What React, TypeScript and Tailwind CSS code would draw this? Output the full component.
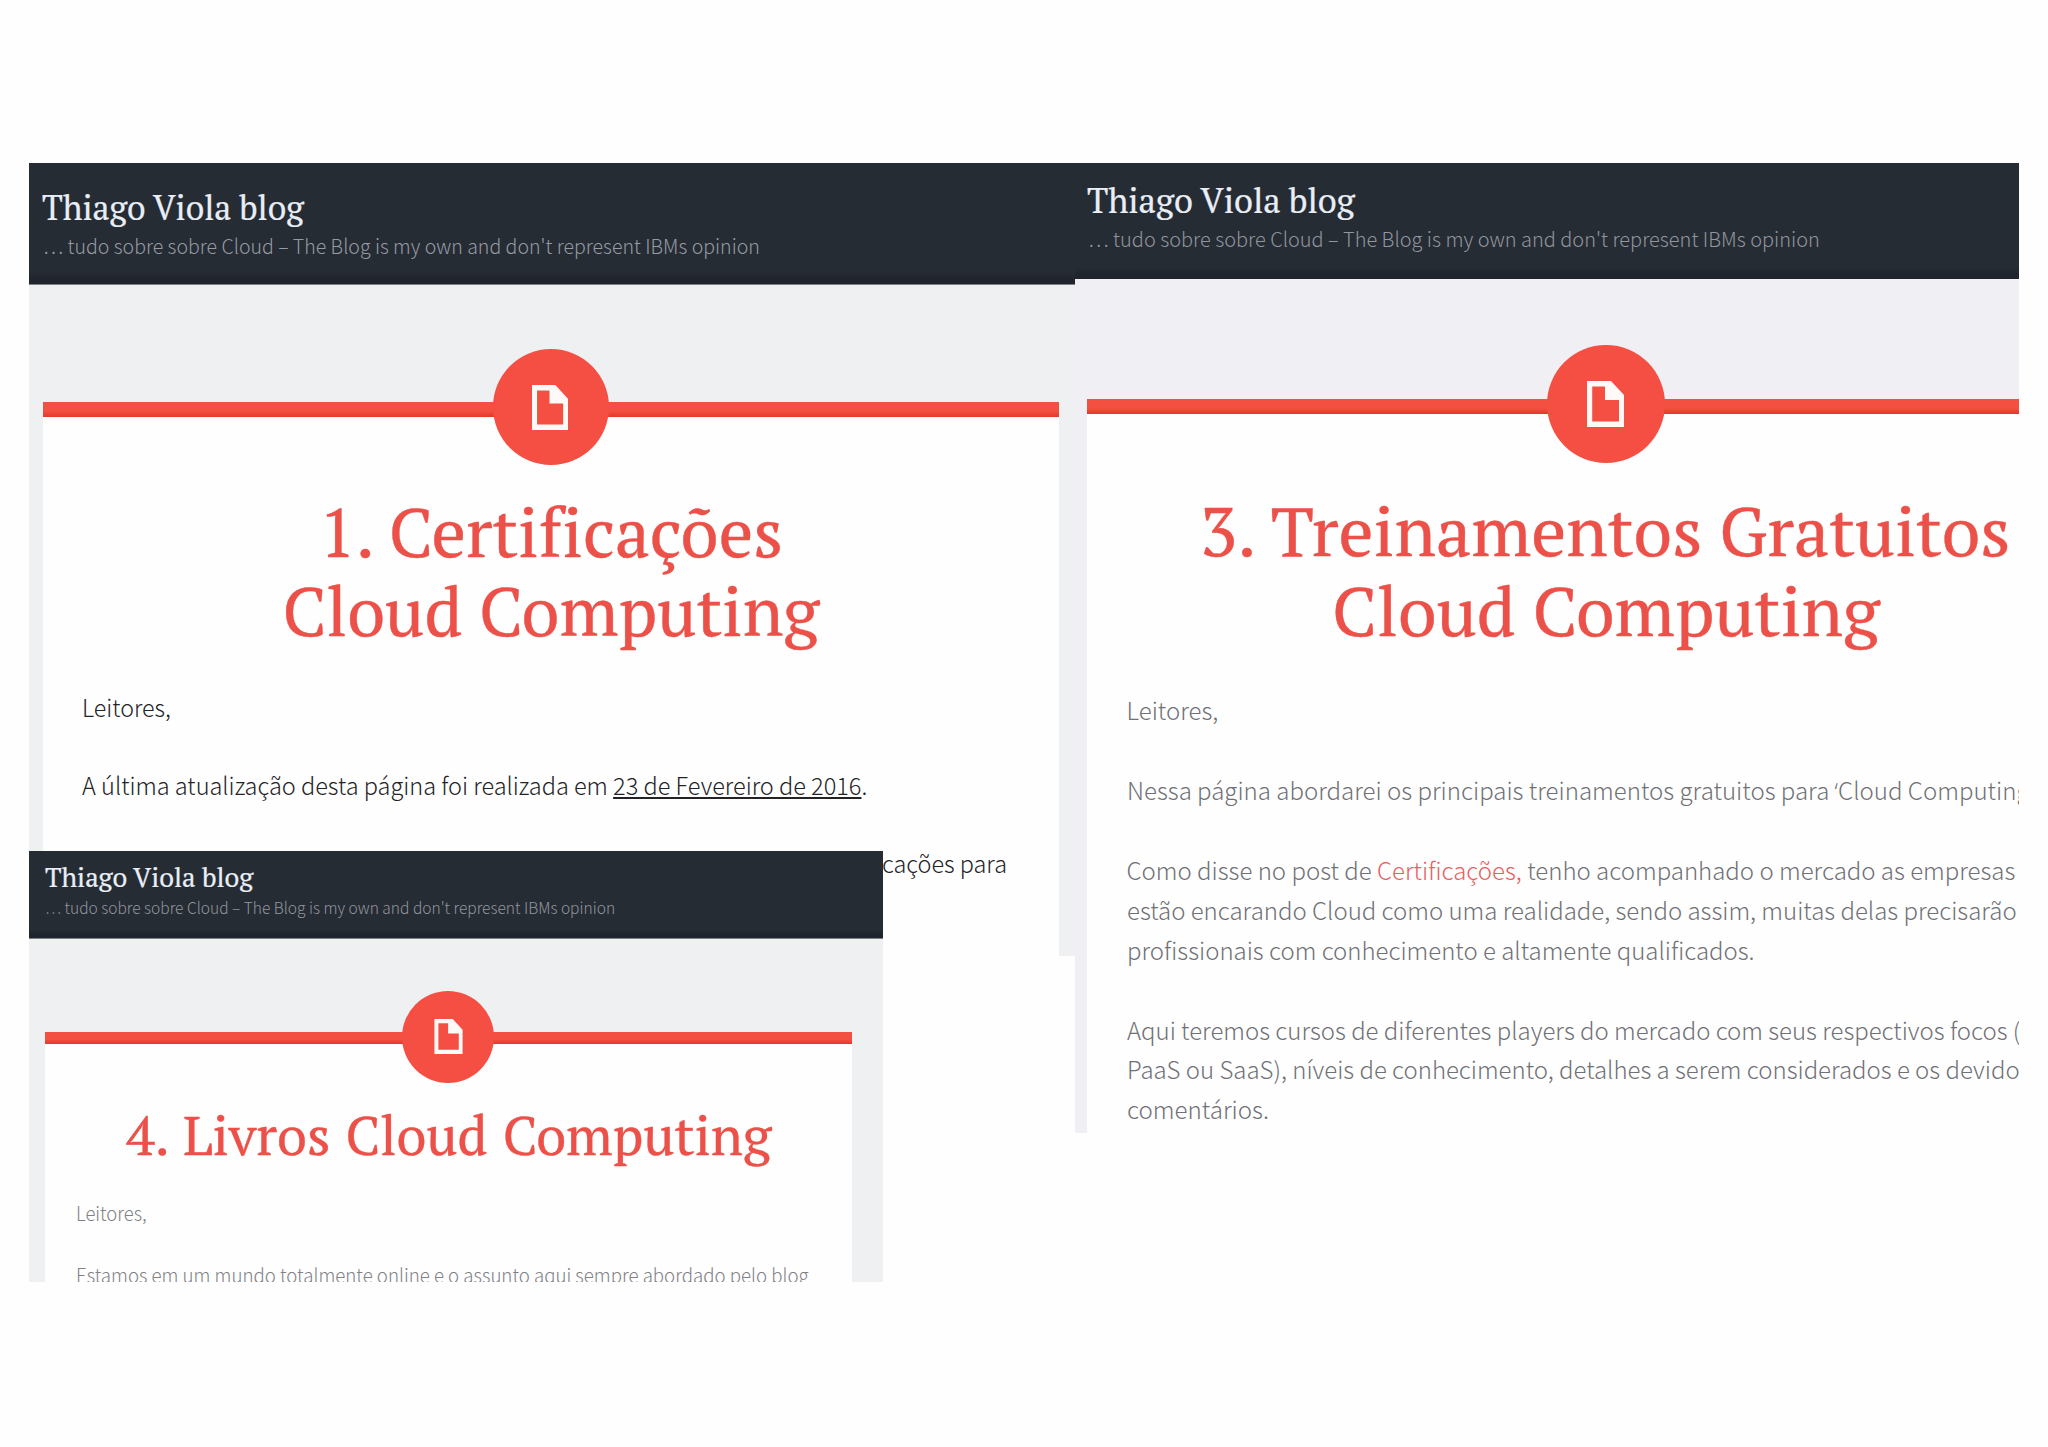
import React, { useLayoutEffect, useRef, useState } from 'react';
import clsx from 'clsx';

const SERIF = "font-['PT_Serif','Liberation_Serif',serif] [font-variant-ligatures:none]";
const SANS = "font-['Noto_Sans_CJK_SC',sans-serif] font-light";
const TAGLINE = "… tudo sobre sobre Cloud – The Blog is my own and don't represent IBMs opinion";

interface LineProps {
  width: number;
  className?: string;
  children: React.ReactNode;
}

const Line: React.FC<LineProps> = ({ width, className, children }) => {
  const ref = useRef<HTMLSpanElement>(null);
  const [scale, setScale] = useState(1);

  useLayoutEffect(() => {
    if (ref.current) setScale(width / ref.current.offsetWidth);
  }, [width]);

  return (
    <span className={clsx('block whitespace-nowrap', className)} style={{ width }}>
      <span ref={ref} className="inline-block origin-left" style={{ transform: `scaleX(${scale})` }}>
        {children}
      </span>
    </span>
  );
};

const PageIcon: React.FC<{ className?: string }> = ({ className }) => (
  <svg viewBox="0 0 37 46" className={className} fill="#fffaf8" fillRule="evenodd">
    <path d="M0 0H24L37 14V46H0Z M5.2 5.5V40.5H32V19H18V5.5Z" />
  </svg>
);

interface RibbonProps {
  className: string;
  badge: string;
  icon: string;
}

const Ribbon: React.FC<RibbonProps> = ({ className, badge, icon }) => (
  <div
    className={clsx(
      'flex items-center justify-center bg-linear-to-b from-[#f35042] from-60% to-[#e3372c]',
      className
    )}
  >
    <div className={clsx('flex shrink-0 items-center justify-center rounded-full bg-[#f44f42]', badge)}>
      <PageIcon className={icon} />
    </div>
  </div>
);

const header = 'bg-linear-to-b from-[#262c34] from-90% to-[#1f242d] to-96%';
const blogTitle = 'text-[#e9eef6] [-webkit-text-stroke:0.2px_#e9eef6]';
const heading = 'mx-auto text-[#ec5149] [-webkit-text-stroke:0.4px_#ec5149]';

const Certificacoes: React.FC = () => (
  <section className="h-[793px] w-[1046px] shrink-0 bg-[#eff0f2]">
    <header className={clsx('h-[122px] border-b border-[#7d8187] pt-[25px] pl-[13px]', header)}>
      <h1 className={clsx('text-[34px] leading-[39px]', SERIF, blogTitle)}>
        <Line width={262}>Thiago Viola blog</Line>
      </h1>
      <p className={clsx('mt-1 ml-px text-[20.5px] leading-[28px] text-[#969ba3]', SANS)}>
        <Line width={717}>{TAGLINE}</Line>
      </p>
    </header>
    <article className="mt-[117px] ml-3.5 h-[554px] w-[1016px] bg-[#fefefe]">
      <Ribbon className="h-[15px]" badge="mt-[-5px] size-[116px]" icon="mr-0.5 h-[45px] w-9" />
      <h2 className={clsx('mt-[74.5px] text-[68.5px] leading-[79px]', SERIF)}>
        <Line width={464} className={heading}>1. Certificações</Line>
        <Line width={537} className={heading}>Cloud Computing</Line>
      </h2>
      <div className={clsx('mt-[37.5px] ml-[39px] flex flex-col gap-[39px] text-[24px] leading-[39px] text-[#232326]', SANS)}>
        <Line width={89}>Leitores,</Line>
        <Line width={785}>
          A última atualização desta página foi realizada em{' '}
          <span className="underline decoration-[1.5px] underline-offset-[2px]">23 de Fevereiro de 2016</span>.
        </Line>
        <Line width={125} className="ml-[800px]">cações para</Line>
      </div>
    </article>
  </section>
);

const Treinamentos: React.FC = () => (
  <section className="h-[970px] w-[944px] shrink-0 overflow-hidden bg-[#f0eff3]">
    <header className={clsx('h-[116px] pt-[18px] pl-3', header)}>
      <h1 className={clsx('text-[34px] leading-[39px]', SERIF, blogTitle)}>
        <Line width={268}>Thiago Viola blog</Line>
      </h1>
      <p className={clsx('mt-1 ml-px text-[20.5px] leading-[28px] text-[#92969e]', SANS)}>
        <Line width={732}>{TAGLINE}</Line>
      </p>
    </header>
    <article className="mt-[120px] ml-3 h-[734px] w-[1038px] bg-[#fefefe]">
      <Ribbon className="h-[15px]" badge="mt-[-5px] size-[118px]" icon="mr-0.5 h-[46px] w-[37px]" />
      <h2 className={clsx('mt-[77px] pr-px text-[69px] leading-[79.5px]', SERIF)}>
        <Line width={811} className={heading}>3. Treinamentos Gratuitos</Line>
        <Line width={548} className={heading}>Cloud Computing</Line>
      </h2>
      <div className={clsx('mt-10 ml-[39.5px] flex flex-col gap-10 text-[24px] leading-[39.9px] text-[#707176]', SANS)}>
        <Line width={92}>Leitores,</Line>
        <Line width={906}>
          Nessa página abordarei os principais treinamentos gratuitos para{' '}
          <span className="font-['Open_Sans',sans-serif] leading-none">‘</span>Cloud Computing
          <span className="font-['Open_Sans',sans-serif] leading-none">’</span>
        </Line>
        <div>
          <Line width={889}>
            Como disse no post de <a className="text-[#ea5f62]">Certificações,</a> tenho acompanhado o mercado as empresas
          </Line>
          <Line width={890}>estão encarando Cloud como uma realidade, sendo assim, muitas delas precisarão</Line>
          <Line width={628}>profissionais com conhecimento e altamente qualificados.</Line>
        </div>
        <div>
          <Line width={893}>Aqui teremos cursos de diferentes players do mercado com seus respectivos focos (</Line>
          <Line width={893}>PaaS ou SaaS), níveis de conhecimento, detalhes a serem considerados e os devido</Line>
          <Line width={141.5}>comentários.</Line>
        </div>
      </div>
    </article>
  </section>
);

const Livros: React.FC = () => (
  <section className="h-[431px] w-[854px] overflow-hidden bg-[#eff0f2]">
    <header className={clsx('h-[88px] border-b border-[#7d8187] pt-3 pl-4', header)}>
      <h1 className={clsx('text-[26.5px] leading-[29px]', SERIF, blogTitle)}>
        <Line width={208}>Thiago Viola blog</Line>
      </h1>
      <p className={clsx('mt-1 text-[16.5px] leading-[22px] text-[#92969e]', SANS)}>
        <Line width={570}>{TAGLINE}</Line>
      </p>
    </header>
    <article className="mt-[93px] ml-4 h-[250px] w-[806.5px] bg-[#fefefe]">
      <Ribbon className="h-3" badge="mt-[-3px] size-[92px]" icon="h-[35px] w-[29px]" />
      <h2 className={clsx('mt-[58px] text-[54.5px] leading-[66px]', SERIF)}>
        <Line width={645} className={clsx('[word-spacing:2px]', heading)}>4. Livros Cloud Computing</Line>
      </h2>
      <div className={clsx('mt-[29px] ml-[30.5px] flex flex-col gap-[31px] text-[19.5px] leading-[31px] text-[#808186]', SANS)}>
        <Line width={71}>Leitores,</Line>
        <Line width={733}>Estamos em um mundo totalmente online e o assunto aqui sempre abordado pelo blog</Line>
      </div>
    </article>
  </section>
);

const App: React.FC = () => {
  return (
    <main className="relative flex h-[1447px] w-[2048px] items-start overflow-hidden bg-[#fefefe] pt-[163px] pl-[29px]">
      <Certificacoes />
      <Treinamentos />
      <div className="absolute top-[851px] left-[29px]">
        <Livros />
      </div>
    </main>
  );
};

export default App;
